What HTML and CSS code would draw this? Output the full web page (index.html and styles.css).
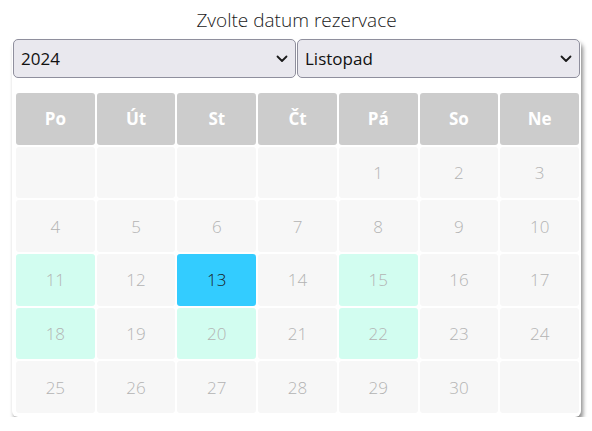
FILE: index.html
```html
<!DOCTYPE html>
<html lang="cs">
<head>
<meta charset="utf-8">
<title>Zvolte datum rezervace</title>
<link rel="stylesheet" href="styles.css">
</head>
<body>
<div class="page">
  <h1 class="title">Zvolte datum rezervace</h1>
  <div class="card">
    <div class="selects">
      <div class="select-wrap">
        <select class="select"><option>2024</option></select>
        <svg class="chev" width="12" height="8" viewBox="0 0 12 8"><path d="M1.5 1.5 L6 6 L10.5 1.5" fill="none" stroke="#1a1a1a" stroke-width="1.8" stroke-linecap="round" stroke-linejoin="round"/></svg>
      </div>
      <div class="select-wrap">
        <select class="select"><option>Listopad</option></select>
        <svg class="chev" width="12" height="8" viewBox="0 0 12 8"><path d="M1.5 1.5 L6 6 L10.5 1.5" fill="none" stroke="#1a1a1a" stroke-width="1.8" stroke-linecap="round" stroke-linejoin="round"/></svg>
      </div>
    </div>
    <div class="grid">
      <div class="head">Po</div><div class="head">Út</div><div class="head">St</div><div class="head">Čt</div><div class="head">Pá</div><div class="head">So</div><div class="head">Ne</div>
      <div class="day"></div><div class="day"></div><div class="day"></div><div class="day"></div><div class="day">1</div><div class="day">2</div><div class="day">3</div>
      <div class="day">4</div><div class="day">5</div><div class="day">6</div><div class="day">7</div><div class="day">8</div><div class="day">9</div><div class="day">10</div>
      <div class="day free">11</div><div class="day">12</div><div class="day today">13</div><div class="day">14</div><div class="day free">15</div><div class="day">16</div><div class="day">17</div>
      <div class="day free">18</div><div class="day">19</div><div class="day free">20</div><div class="day">21</div><div class="day free">22</div><div class="day">23</div><div class="day">24</div>
      <div class="day">25</div><div class="day">26</div><div class="day">27</div><div class="day">28</div><div class="day">29</div><div class="day">30</div><div class="day"></div>
    </div>
  </div>
</div>
</body>
</html>
```

FILE: styles.css
```css
* { box-sizing: border-box; }
html, body { margin: 0; padding: 0; background: #fff; }
body { font-family: "Open Sans", "Noto Sans", sans-serif; }
.page {
  padding: 6px 11px 0 12px;
  width: 592px;
}
.title {
  margin: 0;
  font-size: 19px;
  font-weight: 300;
  line-height: 28px;
  color: #1a1a1a;
  text-align: center;
  height: 33px;
}
.card {
  width: 569px;
  background: #fff;
  border-radius: 6px;
  box-shadow: 2px 4px 4px rgba(0, 0, 0, 0.45);
  padding: 0 2px 4px 1px;
}
.selects {
  display: flex;
  gap: 1px;
  margin-right: -1px;
}
.select-wrap {
  position: relative;
  flex: 1;
}
.select {
  appearance: none;
  -webkit-appearance: none;
  width: 100%;
  height: 39px;
  margin: 0;
  padding: 0 30px 0 7px;
  font-family: "Open Sans", "Noto Sans", sans-serif;
  font-size: 17px;
  color: #111;
  background: #e9e8ee;
  border: 1px solid #8f8f9d;
  border-radius: 5px;
}
.chev {
  position: absolute;
  right: 8px;
  top: 16px;
}
.grid {
  margin: 15px 0 0 3px;
  height: 320px;
  display: grid;
  grid-template-columns: repeat(7, 1fr);
  grid-template-rows: repeat(6, 1fr);
  gap: 2px;
}
.head, .day {
  display: flex;
  align-items: center;
  justify-content: center;
  border-radius: 3px;
}
.head {
  background: #cccccc;
  color: #fff;
  font-weight: 700;
  font-size: 17px;
}
.day {
  background: #f7f7f7;
  color: #b3b3b3;
  font-weight: 300;
  font-size: 17px;
}
.day.free { background: #d2fdf0; }
.day.today { background: #33ccff; color: #1a1a1a; }
```
